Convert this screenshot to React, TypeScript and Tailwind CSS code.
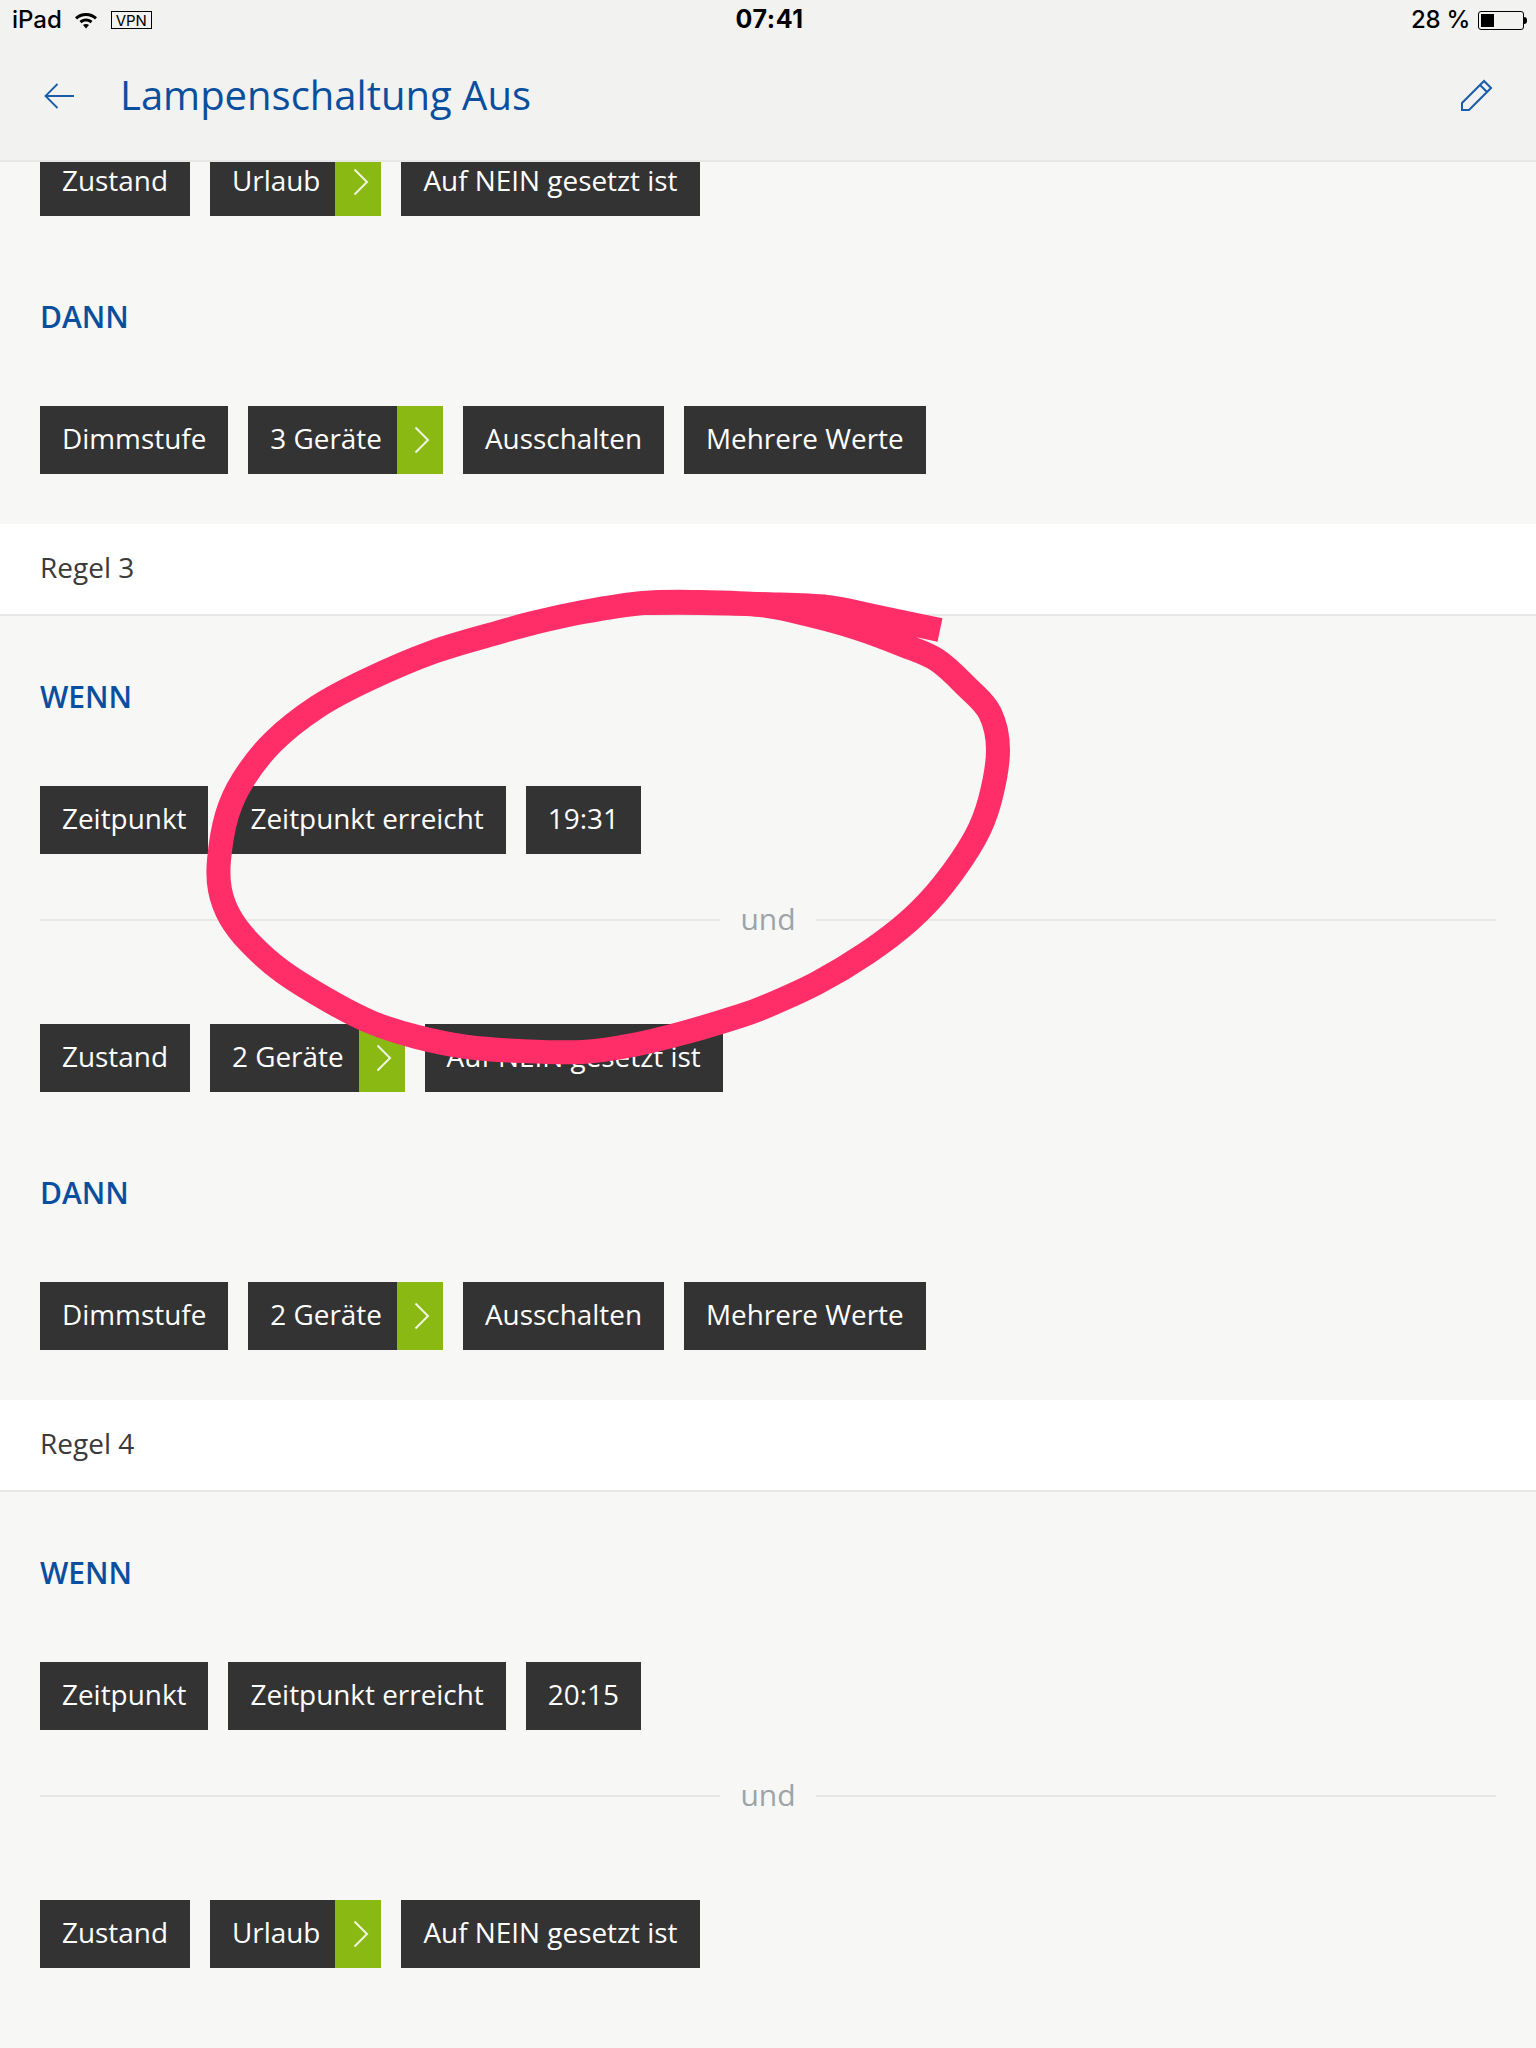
const font = { fontFamily: '"Open Sans", sans-serif' };

// hand-drawn marker loop over Regel 3, page coordinates
const loop: [number, number][] = [
  [940, 630], [873, 616], [827, 607], [760, 604], [700, 602], [643, 603], [583, 612], [533, 623],
  [500, 632], [433, 652], [367, 680], [317, 707], [273, 742], [243, 780], [227, 815], [219, 860],
  [220, 890], [230, 917], [250, 943], [283, 972], [333, 1003], [373, 1023], [417, 1037], [467, 1047],
  [520, 1051], [583, 1052], [633, 1045], [683, 1033], [740, 1016], [767, 1006], [817, 983], [867, 953],
  [910, 920], [943, 885], [975, 838], [990, 800], [998, 750], [990, 713], [967, 687], [937, 660],
  [903, 645], [857, 628], [810, 615], [760, 605], [700, 603], [643, 603],
];

// catmull-rom through the points
function smooth(pts: [number, number][]) {
  let d = `M${pts[0][0]} ${pts[0][1]}`;
  for (let i = 0; i < pts.length - 1; i++) {
    const p0 = pts[Math.max(i - 1, 0)];
    const p1 = pts[i];
    const p2 = pts[i + 1];
    const p3 = pts[Math.min(i + 2, pts.length - 1)];
    const c1x = p1[0] + (p2[0] - p0[0]) / 6;
    const c1y = p1[1] + (p2[1] - p0[1]) / 6;
    const c2x = p2[0] - (p3[0] - p1[0]) / 6;
    const c2y = p2[1] - (p3[1] - p1[1]) / 6;
    d += ` C${c1x} ${c1y} ${c2x} ${c2y} ${p2[0]} ${p2[1]}`;
  }
  return d;
}

function Chip({ label, arrow }: { label: string; arrow?: boolean }) {
  return (
    <div className="flex h-[68px] shrink-0 bg-[#333333] text-[27.9px] text-white">
      <span className={arrow ? "flex items-center pr-[15px] pb-[2px] pl-[22px]" : "flex items-center px-[22px] pb-[2px]"}>{label}</span>
      {arrow && (
        <span className="flex w-[46px] items-center justify-center bg-[#8ab913] pl-[5px]">
          <svg width="16" height="28" viewBox="0 0 16 28" fill="none" stroke="#f1f6e0" strokeWidth="2">
            <path d="M1.5 1.5 L14 14 L1.5 26.5" />
          </svg>
        </span>
      )}
    </div>
  );
}

function Row({ items }: { items: [string, boolean?][] }) {
  return (
    <div className="flex gap-[20px]">
      {items.map(([label, arrow], i) => (
        <Chip key={i} label={label} arrow={arrow} />
      ))}
    </div>
  );
}

function Heading({ children, className }: { children: string; className: string }) {
  return <div className={`h-[40px] text-[30px] leading-[40px] font-semibold text-[#0a4f9e] ${className}`}>{children}</div>;
}

function Und() {
  return (
    <div className="mt-[46px] mb-[84px] flex h-[40px] items-center">
      <div className="h-[2px] flex-1 bg-[#e7e7e5]" />
      <span className="px-[20px] pb-[4px] text-[30px] text-[#9ea3a5]">und</span>
      <div className="h-[2px] flex-1 bg-[#e7e7e5]" />
    </div>
  );
}

function RuleBar({ title }: { title: string }) {
  return (
    <div className="flex h-[92px] items-center border-b-2 border-[#e7e7e5] bg-white px-[40px] pb-[4px] text-[28px] text-[#3a3a3a]">
      {title}
    </div>
  );
}

const dann = (devices: string): [string, boolean?][] => [
  ["Dimmstufe"],
  [devices, true],
  ["Ausschalten"],
  ["Mehrere Werte"],
];

function Rule({ time, device }: { time: string; device: string }) {
  return (
    <div>
      <Heading className="mt-[61px] mb-[69px]">WENN</Heading>
      <Row items={[["Zeitpunkt"], ["Zeitpunkt erreicht"], [time]]} />
      <Und />
      <Row items={[["Zustand"], [device, true], ["Auf NEIN gesetzt ist"]]} />
    </div>
  );
}

export default function App() {
  return (
    <div className="relative h-[2048px] w-[1536px] overflow-hidden bg-[#f7f7f5]" style={font}>
      <header className="h-[162px] border-b-2 border-[#e7e7e5] bg-[#f2f2f1]">
        <div className="flex h-[40px] items-center justify-between pr-[9px] pl-[12px] text-[24px] text-black" style={{ fontFamily: '"Inter", sans-serif' }}>
          <div className="flex w-[500px] items-center">
            <span className="font-medium">iPad</span>
            <svg className="ml-[12px]" width="24" height="20" viewBox="0 0 24 20" fill="black">
              <path d="M12 3C7.7 3 3.9 4.6 1 7.2l2 2.3C5.4 7.4 8.5 6 12 6s6.6 1.4 9 3.5l2-2.3C20.1 4.6 16.3 3 12 3z" />
              <path d="M12 8.5c-2.5 0-4.8.9-6.5 2.4l2 2.3c1.2-1.1 2.8-1.7 4.5-1.7s3.3.6 4.5 1.7l2-2.3C16.8 9.4 14.5 8.5 12 8.5z" />
              <path d="M12 14c-1.2 0-2.2.4-3 1.1l3 3.4 3-3.4c-.8-.7-1.8-1.1-3-1.1z" />
            </svg>
            <span className="ml-[13px] flex h-[18px] w-[41px] items-center justify-center border border-black text-[15px] leading-none">VPN</span>
          </div>
          <span className="text-[25px] font-bold tracking-[0.6px]">07:41</span>
          <div className="flex w-[500px] items-center justify-end">
            <span className="font-medium tracking-[-0.3px]">28 %</span>
            <span className="ml-[8px] flex h-[19px] w-[46px] items-center rounded-[3px] border border-black p-[2px]">
              <span className="h-full w-[13px] bg-black" />
            </span>
            <span className="h-[7px] w-[3px] rounded-r-full bg-black" />
          </div>
        </div>
        <div className="flex h-[112px] items-center justify-between pr-[44px] pl-[44px] text-[#0a4f9e]">
          <div className="flex items-center">
            <svg width="30" height="26" viewBox="0 0 30 26" fill="none" stroke="#1a5ca8" strokeWidth="1.8">
              <path d="M30 13 H2 M13.5 1 L1.5 13 L13.5 25" />
            </svg>
            <h1 className="ml-[46px] pb-[2px] text-[40px] font-normal">Lampenschaltung Aus</h1>
          </div>
          <svg className="mb-[2px]" width="32" height="32" viewBox="0 0 32 32" fill="none" stroke="#1a5ca8" strokeWidth="2">
            <path d="M2 24 L24 2 L31 9 L9 31 H2 Z M20 6 L27 13" />
          </svg>
        </div>
      </header>

      <main className="px-[40px]">
        <div className="flex h-[54px] items-end overflow-hidden">
          <Row items={[["Zustand"], ["Urlaub", true], ["Auf NEIN gesetzt ist"]]} />
        </div>
        <Heading className="mt-[81px] mb-[69px]">DANN</Heading>
        <div className="pb-[50px]">
          <Row items={dann("3 Geräte")} />
        </div>
      </main>

      <RuleBar title="Regel 3" />
      <main className="px-[40px]">
        <Rule time="19:31" device="2 Geräte" />
        <Heading className="mt-[81px] mb-[69px]">DANN</Heading>
        <div className="pb-[50px]">
          <Row items={dann("2 Geräte")} />
        </div>
      </main>

      <RuleBar title="Regel 4" />
      <main className="px-[40px]">
        <Rule time="20:15" device="Urlaub" />
      </main>

      <svg className="absolute inset-0" width="1536" height="2048" viewBox="0 0 1536 2048" fill="none">
        <path d={smooth(loop)} stroke="#ff2d68" strokeWidth="24" strokeLinejoin="round" />
      </svg>
    </div>
  );
}
